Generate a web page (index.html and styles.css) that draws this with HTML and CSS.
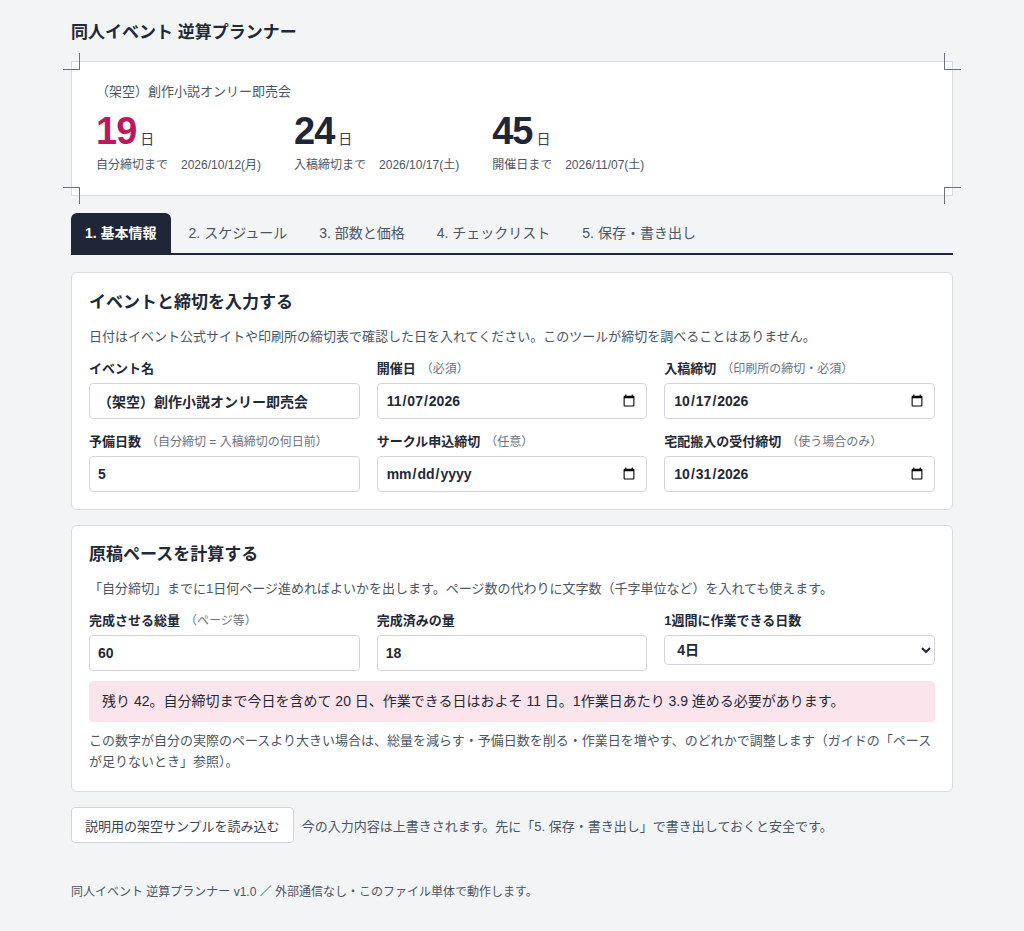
FILE: index.html
```html
<!DOCTYPE html>
<html lang="ja">
<head>
<meta charset="utf-8">
<title>同人イベント 逆算プランナー</title>
<link rel="stylesheet" href="styles.css">
</head>
<body>
<div class="wrap">
  <h1 class="app-title">同人イベント 逆算プランナー</h1>

  <section class="summary">
    <span class="mark mark-tl"></span>
    <span class="mark mark-tr"></span>
    <span class="mark mark-bl"></span>
    <span class="mark mark-br"></span>
    <div class="summary-event">（架空）創作小説オンリー即売会</div>
    <div class="counts">
      <div class="count">
        <div class="count-num"><span class="num urgent">19</span><span class="unit">日</span></div>
        <div class="count-label"><span>自分締切まで</span><span class="count-date">2026/10/12(月)</span></div>
      </div>
      <div class="count">
        <div class="count-num"><span class="num">24</span><span class="unit">日</span></div>
        <div class="count-label"><span>入稿締切まで</span><span class="count-date">2026/10/17(土)</span></div>
      </div>
      <div class="count">
        <div class="count-num"><span class="num">45</span><span class="unit">日</span></div>
        <div class="count-label"><span>開催日まで</span><span class="count-date">2026/11/07(土)</span></div>
      </div>
    </div>
  </section>

  <nav class="tabs">
    <button class="tab active">1. 基本情報</button>
    <button class="tab">2. スケジュール</button>
    <button class="tab">3. 部数と価格</button>
    <button class="tab">4. チェックリスト</button>
    <button class="tab">5. 保存・書き出し</button>
  </nav>

  <section class="card">
    <h2 class="card-title">イベントと締切を入力する</h2>
    <p class="desc">日付はイベント公式サイトや印刷所の締切表で確認した日を入れてください。このツールが締切を調べることはありません。</p>
    <div class="grid">
      <label class="field">
        <span class="label">イベント名</span>
        <input class="input" type="text" value="（架空）創作小説オンリー即売会">
      </label>
      <label class="field">
        <span class="label">開催日<span class="hint">（必須）</span></span>
        <input class="input" type="date" value="2026-11-07">
      </label>
      <label class="field">
        <span class="label">入稿締切<span class="hint">（印刷所の締切・必須）</span></span>
        <input class="input" type="date" value="2026-10-17">
      </label>
      <label class="field">
        <span class="label">予備日数<span class="hint">（自分締切 = 入稿締切の何日前）</span></span>
        <input class="input" type="number" value="5">
      </label>
      <label class="field">
        <span class="label">サークル申込締切<span class="hint">（任意）</span></span>
        <input class="input" type="date">
      </label>
      <label class="field">
        <span class="label">宅配搬入の受付締切<span class="hint">（使う場合のみ）</span></span>
        <input class="input" type="date" value="2026-10-31">
      </label>
    </div>
  </section>

  <section class="card">
    <h2 class="card-title">原稿ペースを計算する</h2>
    <p class="desc">「自分締切」までに1日何ページ進めればよいかを出します。ページ数の代わりに文字数（千字単位など）を入れても使えます。</p>
    <div class="grid">
      <label class="field">
        <span class="label">完成させる総量<span class="hint">（ページ等）</span></span>
        <input class="input" type="number" value="60">
      </label>
      <label class="field">
        <span class="label">完成済みの量</span>
        <input class="input" type="number" value="18">
      </label>
      <label class="field">
        <span class="label">1週間に作業できる日数</span>
        <select class="select">
          <option>7日</option>
          <option>6日</option>
          <option>5日</option>
          <option selected>4日</option>
          <option>3日</option>
          <option>2日</option>
          <option>1日</option>
        </select>
      </label>
    </div>
    <div class="result">残り 42。自分締切まで今日を含めて 20 日、作業できる日はおよそ 11 日。1作業日あたり 3.9 進める必要があります。</div>
    <p class="note">この数字が自分の実際のペースより大きい場合は、総量を減らす・予備日数を削る・作業日を増やす、のどれかで調整します（ガイドの「ペースが足りないとき」参照）。</p>
  </section>

  <div class="sample-row">
    <button class="btn">説明用の架空サンプルを読み込む</button>
    <span class="sample-note">今の入力内容は上書きされます。先に「5. 保存・書き出し」で書き出しておくと安全です。</span>
  </div>

  <footer class="footer">同人イベント 逆算プランナー v1.0 ／ 外部通信なし・このファイル単体で動作します。</footer>
</div>
</body>
</html>
```

FILE: styles.css
```css
* { box-sizing: border-box; }

html, body {
  margin: 0;
  padding: 0;
  background: #f3f4f6;
}

body {
  font-family: "Liberation Sans", "Noto Sans CJK JP", sans-serif;
  color: #1f2937;
  font-size: 14px;
}

.wrap {
  width: 882px;
  margin: 0 auto;
  padding: 20px 0 30px;
}

.app-title {
  font-size: 17px;
  font-weight: 700;
  line-height: 25px;
  margin: 0 0 16px;
  color: #1f2937;
}

/* summary */
.summary {
  position: relative;
  background: #fff;
  border: 1px solid #d8dbe0;
  padding: 20px 24px 21px;
}

.mark {
  position: absolute;
  width: 17px;
  height: 17px;
  border-color: #6b7280;
  border-style: solid;
  border-width: 0;
}
.mark-tl { left: -9px; top: -9px; border-right-width: 1px; border-bottom-width: 1px; }
.mark-tr { right: -9px; top: -9px; border-left-width: 1px; border-bottom-width: 1px; }
.mark-bl { left: -9px; bottom: -9px; border-right-width: 1px; border-top-width: 1px; }
.mark-br { right: -9px; bottom: -9px; border-left-width: 1px; border-top-width: 1px; }

.summary-event {
  font-size: 13px;
  line-height: 20px;
  color: #4b5563;
}

.counts {
  display: flex;
  gap: 33px;
  margin-top: 11px;
}

.count-num {
  line-height: 36px;
  height: 36px;
  white-space: nowrap;
}

.num {
  font-size: 38px;
  font-weight: 700;
  letter-spacing: -1px;
  color: #1e2638;
}
.num.urgent { color: #be185d; }

.unit {
  font-size: 14px;
  color: #374151;
  margin-left: 4px;
}

.count-label {
  font-size: 12px;
  line-height: 18px;
  color: #4b5563;
  margin-top: 7px;
  white-space: nowrap;
}

.count-date { margin-left: 13px; }

/* tabs */
.tabs {
  display: flex;
  gap: 4px;
  margin-top: 17px;
  border-bottom: 2px solid #1e2638;
}

.tab {
  font-family: inherit;
  font-size: 14px;
  line-height: 20px;
  padding: 10px 14px 10px;
  border: 0;
  background: transparent;
  color: #4b5563;
  border-radius: 6px 6px 0 0;
  cursor: pointer;
}

.tab.active {
  background: #1e2638;
  color: #fff;
  font-weight: 700;
}

/* cards */
.card {
  background: #fff;
  border: 1px solid #d8dbe0;
  border-radius: 6px;
  padding: 18px 17px 17px;
  margin-top: 17px;
}
.card + .card { margin-top: 15px; padding-top: 17px; padding-bottom: 16px; }

.card-title {
  font-size: 17px;
  font-weight: 700;
  line-height: 24px;
  margin: 0;
  color: #1f2937;
}

.desc {
  font-size: 13px;
  line-height: 20px;
  color: #4b5563;
  margin: 12px 0 13px;
}

.grid {
  display: grid;
  grid-template-columns: repeat(3, 1fr);
  column-gap: 17px;
  row-gap: 14px;
  align-items: start;
}

.field { display: block; }

.label {
  display: block;
  font-size: 13px;
  font-weight: 700;
  line-height: 18px;
  color: #1f2937;
  margin-bottom: 5px;
}

.hint {
  font-size: 12px;
  font-weight: 400;
  color: #6b7280;
  margin-left: 5px;
}

.input, .select {
  display: block;
  width: 100%;
  margin: 0;
  font-family: inherit;
  font-size: 14px;
  font-weight: 700;
  color: #1f2937;
  background: #fff;
  border: 1px solid #d1d5db;
  border-radius: 4px;
}

.input {
  height: 36px;
  padding: 0 8px;
}

.select {
  height: 30px;
  padding: 0 8px;
}

input[type="number"]::-webkit-inner-spin-button,
input[type="number"]::-webkit-outer-spin-button {
  -webkit-appearance: none;
  margin: 0;
}

.result {
  margin-top: 10px;
  background: #fce4ec;
  border-radius: 4px;
  padding: 10px 13px 10px;
  font-size: 14px;
  line-height: 21px;
  height: 41px;
  color: #1f2937;
}

.note {
  font-size: 13px;
  line-height: 21px;
  color: #4b5563;
  margin: 8px 0 3px;
}

/* sample row */
.sample-row {
  display: flex;
  align-items: center;
  gap: 8px;
  margin-top: 15px;
}

.btn {
  font-family: inherit;
  font-size: 13px;
  height: 36px;
  padding: 0 13px;
  background: #fff;
  color: #374151;
  border: 1px solid #d1d5db;
  border-radius: 4px;
  cursor: pointer;
}

.sample-note {
  font-size: 13px;
  color: #4b5563;
}

.footer {
  margin-top: 40px;
  font-size: 12px;
  line-height: 18px;
  color: #4b5563;
}
```
